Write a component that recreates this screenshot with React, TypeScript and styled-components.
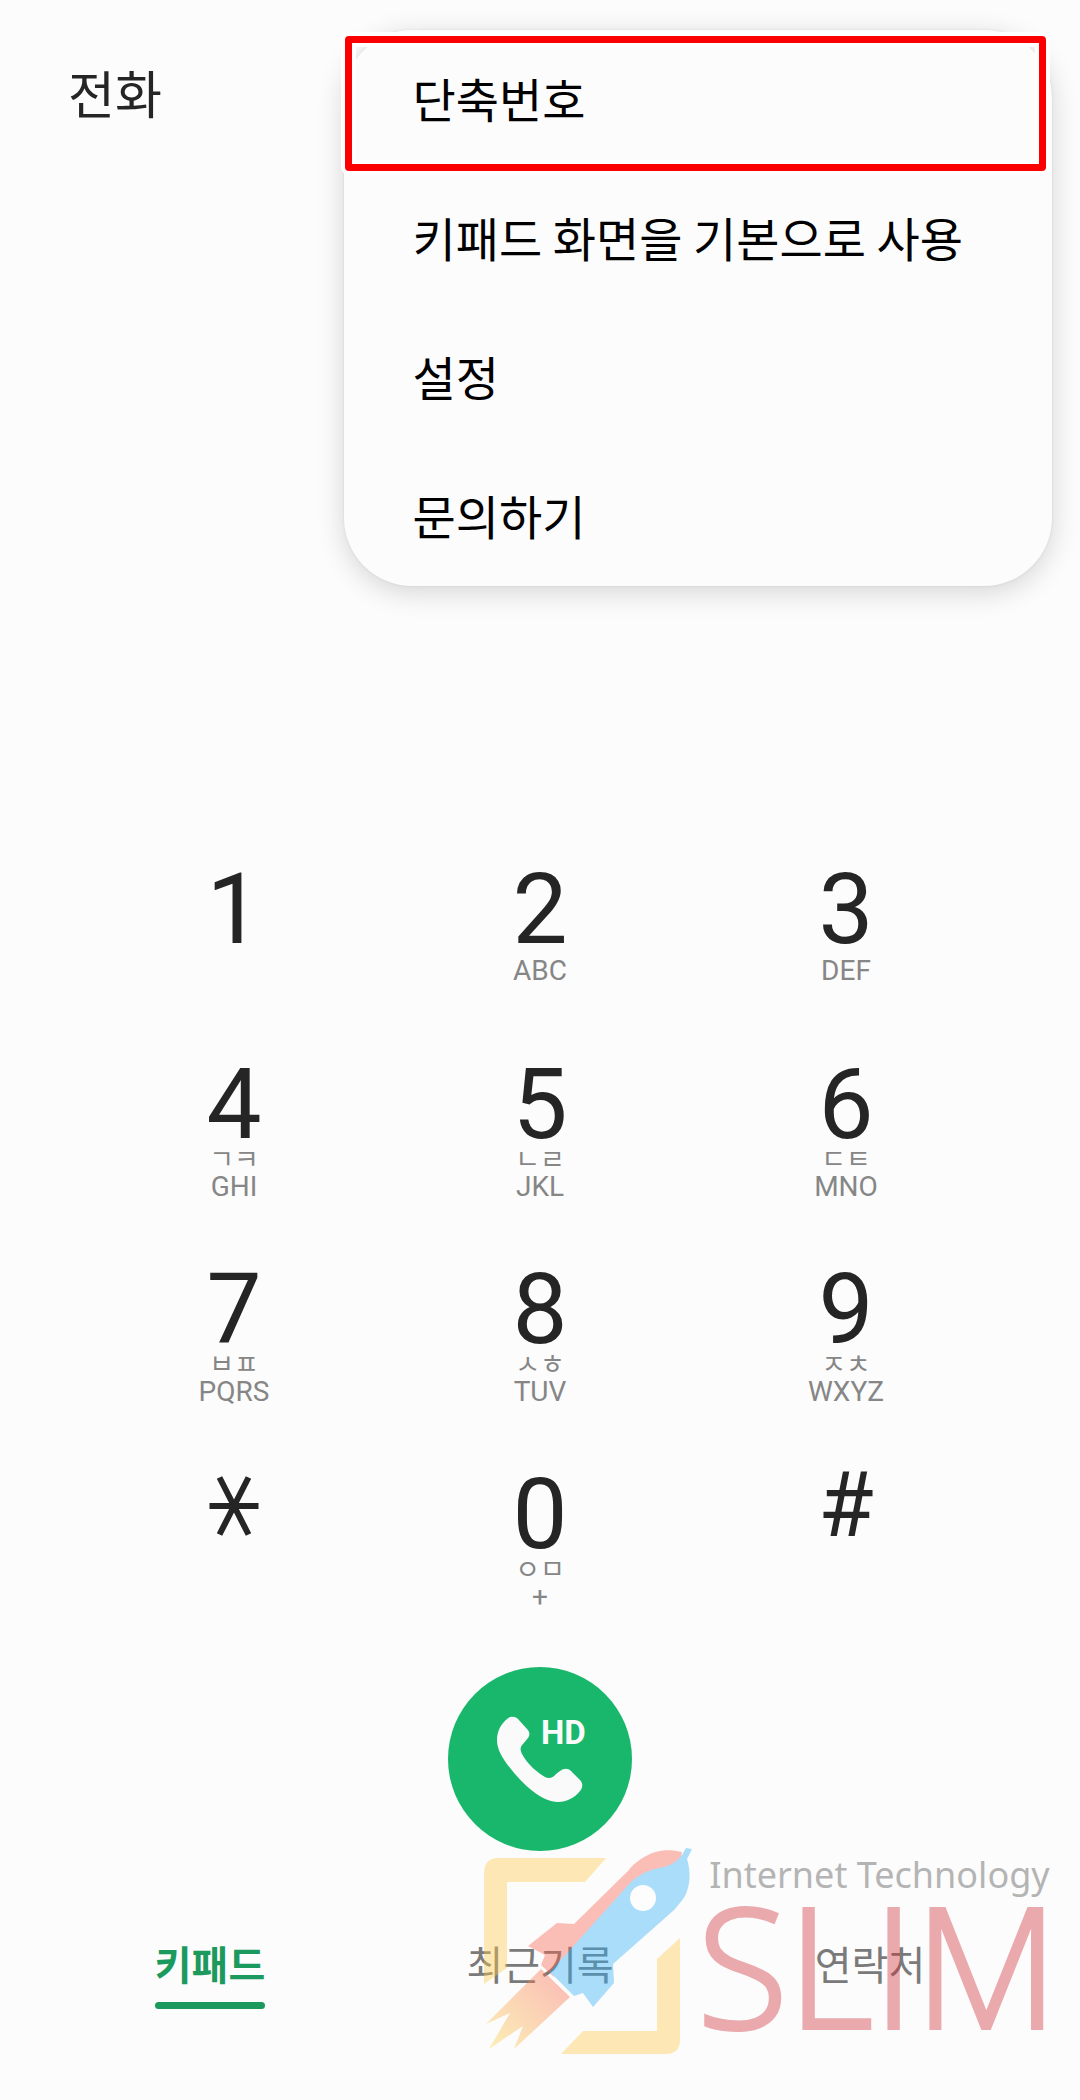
import React from "react";
import styled, { createGlobalStyle } from "styled-components";

const GlobalStyle = createGlobalStyle`
  *, *::before, *::after { box-sizing: border-box; }
  body {
    margin: 0;
    background: #fcfcfc;
    color: #252525;
    font-family: Roboto, "Noto Sans CJK KR", sans-serif;
  }
  button {
    margin: 0;
    padding: 0;
    border: 0;
    background: none;
    color: inherit;
    font: inherit;
    cursor: pointer;
  }
`;

const Screen = styled.div`
  position: relative;
  display: flex;
  flex-direction: column;
  min-height: 100vh;
  overflow: hidden;
`;

const Header = styled.header`
  display: flex;
  align-items: center;
  height: 184px;
  padding: 0 68px;
`;

const Title = styled.h1`
  margin: 0;
  font-family: "Noto Sans CJK KR", sans-serif;
  font-size: 51px;
  line-height: 60px;
  font-weight: 400;
`;

const Menu = styled.div`
  position: absolute;
  top: 30px;
  right: 28px;
  z-index: 2;
  display: flex;
  flex-direction: column;
  border-radius: 68px;
  background: #fcfcfc;
  box-shadow: 0 6px 28px rgba(0, 0, 0, 0.16), 0 0 3px rgba(0, 0, 0, 0.08);
`;

const MenuItem = styled.button`
  position: relative;
  height: 139px;
  padding: 0 89px 4px 69px;
  color: #000;
  font-family: "Noto Sans CJK KR", sans-serif;
  font-size: 47px;
  line-height: 60px;
  text-align: left;
  white-space: nowrap;
`;

const Highlight = styled.span`
  position: absolute;
  inset: 6px 6px -2px 1px;
  border: 7px solid #fb0000;
  border-radius: 4px;
  box-shadow: 0 0 0 4px #fff, inset 0 0 0 4px #fff;
`;

const NumberDisplay = styled.output`
  height: 638px;
`;

const Keypad = styled.div`
  display: grid;
  grid-template-columns: repeat(3, 1fr);
  grid-auto-rows: 205px;
  padding: 0 81px;
`;

const Key = styled.button`
  display: flex;
  flex-direction: column;
  align-items: center;
  justify-content: center;
`;

const Digit = styled.span`
  font-size: 98px;
  line-height: 93px;
`;

const Symbol = styled.span`
  display: flex;
  align-items: center;
  height: 60px;
  margin-bottom: 68px;
  font-size: 90px;
  line-height: 60px;
`;

const Jamo = styled.span`
  padding-bottom: 8px;
  color: #868686;
  font-family: "Noto Sans CJK KR", sans-serif;
  font-size: 27px;
  line-height: 13px;
`;

const Letters = styled.span`
  min-height: 30px;
  color: #868686;
  font-size: 28px;
  line-height: 30px;
`;

const CallRow = styled.div`
  display: flex;
  justify-content: center;
  padding-top: 25px;
`;

const CallButton = styled.button`
  position: relative;
  width: 184px;
  height: 184px;
  border-radius: 50%;
  background: #19b76c;
  color: #fafafa;
`;

const HdBadge = styled.span`
  position: absolute;
  top: 48px;
  left: 93px;
  font-size: 33px;
  line-height: 36px;
  font-weight: 700;
`;

const Tabs = styled.nav`
  display: grid;
  grid-template-columns: repeat(3, 1fr);
  justify-items: center;
  align-items: start;
  padding: 85px 45px 92px;
`;

const Tab = styled.button<{ $active?: boolean }>`
  color: ${(p) => (p.$active ? "#1c9a5e" : "#7a7a7a")};
  font-family: "Noto Sans CJK KR", sans-serif;
  font-size: 40px;
  line-height: 54px;
  font-weight: ${(p) => (p.$active ? 700 : 400)};

  &::after {
    content: "";
    display: block;
    height: 7px;
    margin-top: 12px;
    border-radius: 4px;
    background: ${(p) => (p.$active ? "#1c9a5e" : "transparent")};
  }
`;

const Watermark = styled.div`
  position: absolute;
  right: 22px;
  bottom: 43px;
  z-index: 3;
  display: flex;
  gap: 2px;
  opacity: 0.4;
  pointer-events: none;
`;

const BrandText = styled.div`
  display: flex;
  flex-direction: column;
  padding-top: 6px;
  font-family: "Open Sans", sans-serif;
  white-space: nowrap;
`;

const Tagline = styled.span`
  padding-left: 12px;
  color: #4a4a4a;
  font-family: "Noto Sans", sans-serif;
  font-size: 36px;
  line-height: 46px;
`;

const Brand = styled.span`
  color: #d12f36;
  font-size: 166px;
  line-height: 132px;
  font-weight: 300;
  -webkit-text-stroke: 4px #d12f36;
`;

const StarIcon = () => (
  <svg width="50" height="60" viewBox="0 0 50 60" aria-hidden="true">
    <path
      d="M0.500 30H49.500M10.500 1.500L39.500 58.500M39.500 1.500L10.500 58.500"
      stroke="#252525"
      strokeWidth="6"
      fill="none"
    />
  </svg>
);

const PhoneIcon = () => (
  <svg width="184" height="184" viewBox="0 0 184 184" aria-hidden="true">
    <path
      d="M59 52C62 49 67 49 70 52L79 62C82 65 82 68 80 71L75 77C72 80 72 83 74 87C80 98 90 106 97 110C101 112 105 111 108 107L112 104C116 101 120 101 123 104L132 113C135 116 135 120 132 124C125 133 114 137 103 134C92 131 79 121 67 107C56 94 49 84 49 73C49 64 53 57 59 52Z"
      fill="currentColor"
    />
  </svg>
);

const RocketLogo = () => (
  <svg width="215" height="212" viewBox="0 0 215 212" aria-hidden="true">
    <defs>
      <linearGradient id="flame" x1="80" y1="130" x2="15" y2="198" gradientUnits="userSpaceOnUse">
        <stop offset="0" stopColor="#fb6450" />
        <stop offset="1" stopColor="#fbd34c" />
      </linearGradient>
    </defs>
    <path d="M4 138V28Q4 12 18 12H126L105 36H27V122Z" fill="#ffcc4c" />
    <path d="M200 92V194Q200 208 185 208H81L103 185H177V113Z" fill="#ffcc4c" />
    <path
      d="M202 6C187 2 174 5 166 10C159 14 153 18 148 25L94 78L77 77L48 100L65 109L61 119L74 131L141 62L200 16Z"
      fill="#fb6450"
    />
    <path
      d="M206 2L212 3L207 13C211 26 210 38 206 48C203 54 199 58 194 64L133 118L134 137L113 161L103 147L94 150L70 126L150 37C161 26 173 23 184 21C192 19 198 14 202 9Z"
      fill="#2faff5"
    />
    <circle cx="163" cy="52" r="13" fill="#fff" />
    <path d="M61 123L90 151L34 203L43 180L9 203L30 167L6 178Z" fill="url(#flame)" />
  </svg>
);

const menuItems = ["단축번호", "키패드 화면을 기본으로 사용", "설정", "문의하기"];

type KeyDef = { digit: string; jamo?: string; letters?: string };

const keys: KeyDef[] = [
  { digit: "1" },
  { digit: "2", letters: "ABC" },
  { digit: "3", letters: "DEF" },
  { digit: "4", jamo: "ㄱㅋ", letters: "GHI" },
  { digit: "5", jamo: "ㄴㄹ", letters: "JKL" },
  { digit: "6", jamo: "ㄷㅌ", letters: "MNO" },
  { digit: "7", jamo: "ㅂㅍ", letters: "PQRS" },
  { digit: "8", jamo: "ㅅㅎ", letters: "TUV" },
  { digit: "9", jamo: "ㅈㅊ", letters: "WXYZ" },
  { digit: "*" },
  { digit: "0", jamo: "ㅇㅁ", letters: "+" },
  { digit: "#" },
];

const tabs = ["키패드", "최근기록", "연락처"];

export default function App() {
  return (
    <Screen>
      <GlobalStyle />
      <Header>
        <Title>전화</Title>
      </Header>
      <Menu role="menu">
        {menuItems.map((label, i) => (
          <MenuItem key={label} type="button" role="menuitem">
            {label}
            {i === 0 && <Highlight />}
          </MenuItem>
        ))}
      </Menu>
      <NumberDisplay />
      <Keypad>
        {keys.map(({ digit, jamo, letters }) => (
          <Key key={digit} type="button" aria-label={digit}>
            {digit === "*" || digit === "#" ? (
              <Symbol>{digit === "*" ? <StarIcon /> : digit}</Symbol>
            ) : (
              <>
                <Digit>{digit}</Digit>
                {jamo && <Jamo>{jamo}</Jamo>}
                <Letters>{letters}</Letters>
              </>
            )}
          </Key>
        ))}
      </Keypad>
      <CallRow>
        <CallButton type="button" aria-label="HD 통화">
          <PhoneIcon />
          <HdBadge>HD</HdBadge>
        </CallButton>
      </CallRow>
      <Tabs>
        {tabs.map((label, i) => (
          <Tab key={label} type="button" $active={i === 0}>
            {label}
          </Tab>
        ))}
      </Tabs>
      <Watermark>
        <RocketLogo />
        <BrandText>
          <Tagline>Internet Technology</Tagline>
          <Brand>SLIM</Brand>
        </BrandText>
      </Watermark>
    </Screen>
  );
}
